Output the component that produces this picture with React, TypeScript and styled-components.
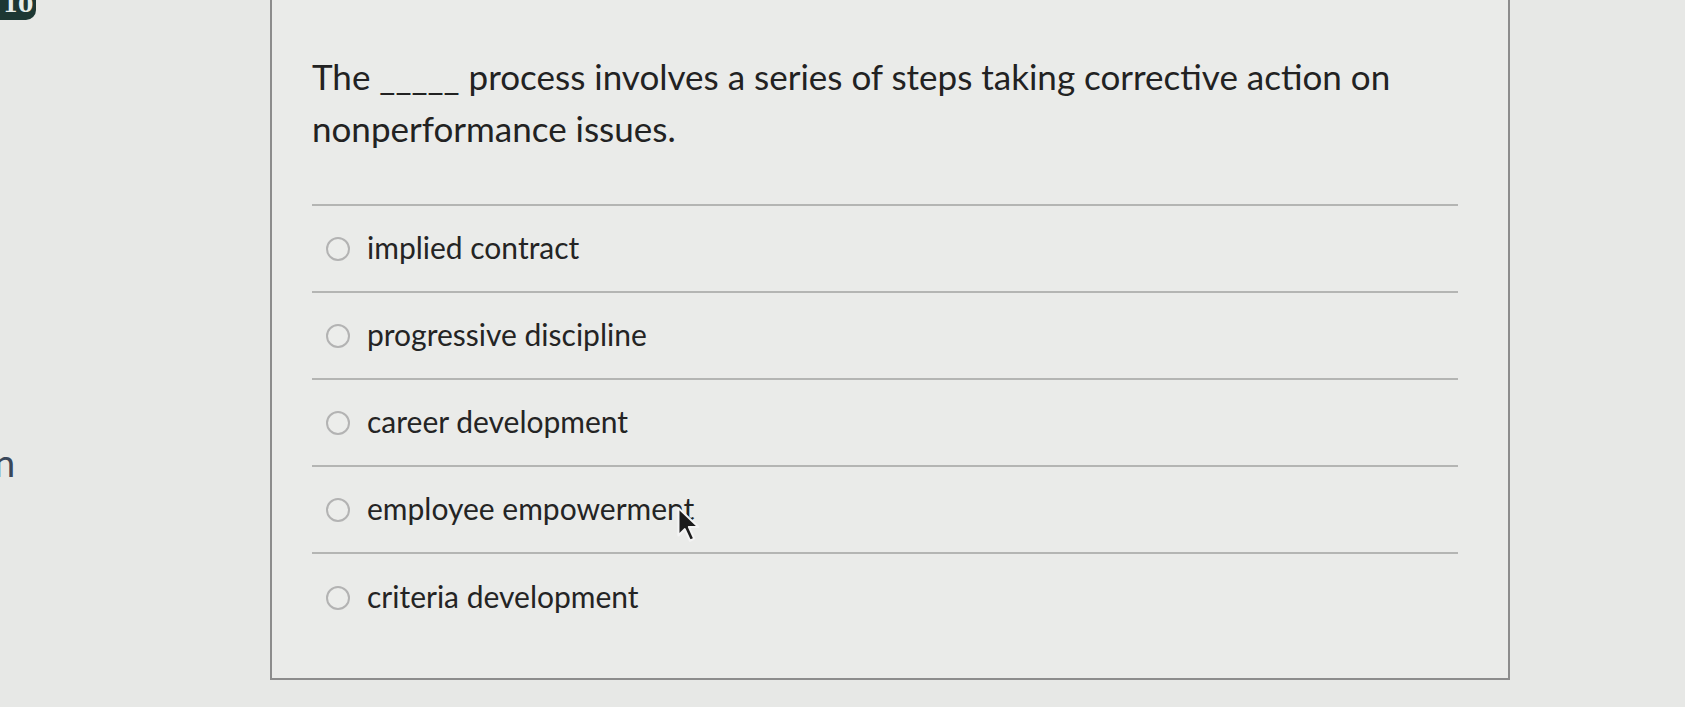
import React from "react";
import styled, { createGlobalStyle } from "styled-components";

const options = [
  "implied contract",
  "progressive discipline",
  "career development",
  "employee empowerment",
  "criteria development",
];

const GlobalStyle = createGlobalStyle`
  html, body {
    margin: 0;
    padding: 0;
    background: #e7e8e6;
    overflow: hidden;
  }
  body {
    font-family: Lato, "Open Sans", "Liberation Sans", sans-serif;
    color: #242424;
  }
`;

function Cursor() {
  return (
    <CursorStyle>
      <svg width="28" height="40" viewBox="0 0 26 38">
        <path
          d="M2 2 L2 28 L8 22 L13 33 L17 31 L12 20 L21 20 Z"
          fill="#1c1c1c"
          stroke="#f4f4f4"
          strokeWidth="2"
          strokeLinejoin="round"
        />
      </svg>
    </CursorStyle>
  );
}

function App() {
  return (
    <>
      <GlobalStyle />
      <PageStyle>
        <Sidebar>
          <Badge>10</Badge>
          <SideText>n</SideText>
        </Sidebar>
        <QuestionCard>
          <p className="question">
            The _____ process involves a series of steps taking corrective
            action on nonperformance issues.
          </p>
          <OptionList>
            {options.map((item) => (
              <OptionRow key={item}>
                <Radio />
                <span>{item}</span>
              </OptionRow>
            ))}
          </OptionList>
          <Cursor />
        </QuestionCard>
      </PageStyle>
    </>
  );
}

const PageStyle = styled.div`
  display: flex;
  width: 1685px;
  height: 707px;
`;

const Sidebar = styled.div`
  width: 270px;
  flex-shrink: 0;
  display: flex;
  flex-direction: column;
`;

const Badge = styled.div`
  width: 36px;
  height: 20px;
  background: #1d3733;
  border-radius: 0 0 10px 0;
  color: #e6ece9;
  font-size: 22px;
  font-weight: bold;
  line-height: 8px;
  text-align: center;
  overflow: hidden;
  font-family: "DejaVu Serif", serif;
`;

const SideText = styled.div`
  margin-top: 422px;
  margin-left: -6px;
  font-size: 38px;
  line-height: 40px;
  color: #39475a;
`;

const QuestionCard = styled.div`
  position: relative;
  width: 1240px;
  height: 682px;
  margin-top: -2px;
  box-sizing: border-box;
  border: 2px solid #8c8c8c;
  background: #eaebe9;
  padding: 50px 50px 0 40px;
  .question {
    margin: 0;
    width: 1120px;
    font-size: 35px;
    line-height: 52px;
    color: #222222;
  }
`;

const OptionList = styled.div`
  margin-top: 50px;
  border-top: 2px solid #b4b5b3;
`;

const OptionRow = styled.div`
  display: flex;
  align-items: center;
  height: 87px;
  padding-left: 14px;
  box-sizing: border-box;
  font-size: 30px;
  color: #242424;
  &:not(:last-child) {
    border-bottom: 2px solid #b4b5b3;
  }
  span {
    margin-left: 17px;
    margin-top: -4px;
  }
`;

const Radio = styled.div`
  width: 20px;
  height: 20px;
  border-radius: 50%;
  border: 2px solid #b3b3b3;
  background: #ecedeb;
  flex-shrink: 0;
`;

const CursorStyle = styled.div`
  position: absolute;
  left: 404px;
  top: 506px;
`;

export default App;
